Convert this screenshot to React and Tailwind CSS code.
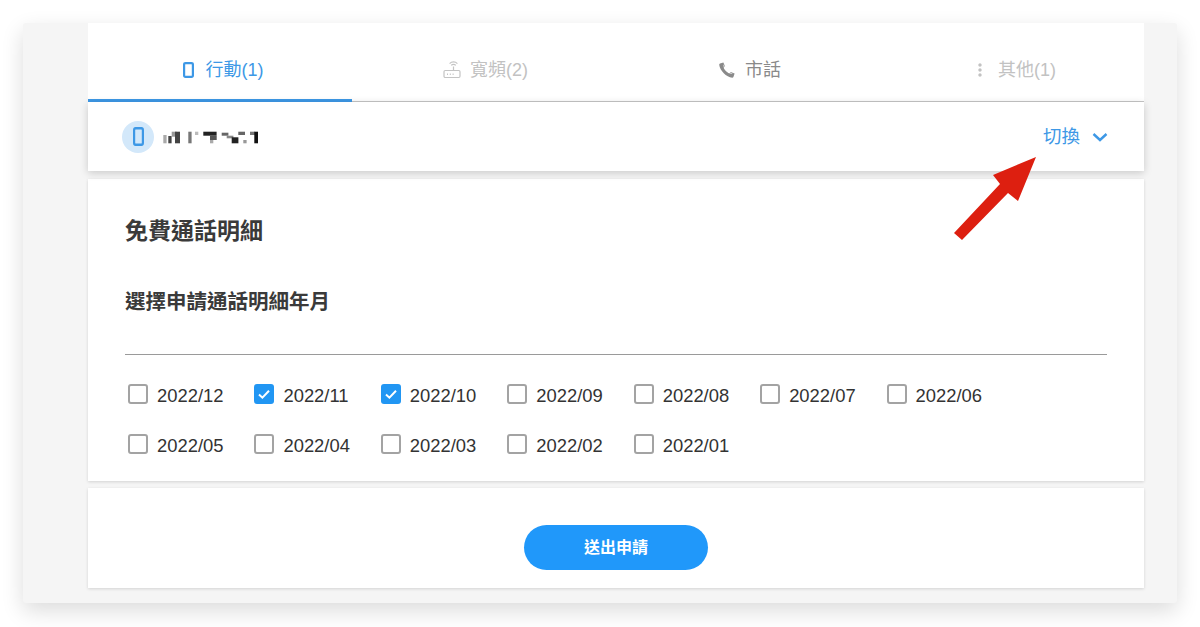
import React from 'react';
import { MdMoreVert } from 'react-icons/md';

const FONT = 'font-["Liberation_Sans","Noto_Sans_CJK_TC",sans-serif]';

const months = [
  ['2022/12', false],
  ['2022/11', true],
  ['2022/10', true],
  ['2022/09', false],
  ['2022/08', false],
  ['2022/07', false],
  ['2022/06', false],
  ['2022/05', false],
  ['2022/04', false],
  ['2022/03', false],
  ['2022/02', false],
  ['2022/01', false],
];

// pixelated number, blurred out in the reference: x, y, w, h, fill
const mosaic = [
  [1.3, 6, 3.3, 8.3, '#aaa'],
  [6.3, 7, 3.3, 7.3, '#444'],
  [9.7, 2.7, 5, 5, '#999'],
  [13, 2.7, 5, 11.6, '#444'],
  [26.3, 2.7, 3.3, 11.6, '#777'],
  [33, 2.7, 3.3, 3.3, '#bbb'],
  [41.3, 2.7, 13.3, 4, '#222'],
  [48, 6.7, 6.7, 4.3, '#555'],
  [48, 11, 3.3, 3.3, '#aaa'],
  [59.7, 3.7, 6.7, 3, '#666'],
  [64.7, 6.7, 6.7, 2.6, '#888'],
  [69.7, 8.3, 6.7, 6, '#222'],
  [76.3, 2.7, 6.7, 3.3, '#666'],
  [81.3, 11, 3.3, 3.3, '#999'],
  [88, 2.7, 5, 3.3, '#777'],
  [92.3, 2.7, 4, 11.6, '#111'],
];

const PhoneIcon = ({ className, fill }) => (
  <svg viewBox="0 0 12 18" preserveAspectRatio="none" className={className}>
    <rect x="1.2" y="1.2" width="9.6" height="15.6" rx="1.6" fill={fill} stroke="#3d98e6" strokeWidth="2.4" />
  </svg>
);

const RouterIcon = () => (
  <svg viewBox="0 0 18 18" className="w-[18px] h-[18px]" fill="none" stroke="#c4c4c4" strokeWidth="1.2">
    <rect x="1" y="9.5" width="16" height="7" rx="1.2" />
    <path d="M10.5 9.5V5.5" />
    <path d="M8.2 4.4a3.2 3.2 0 0 1 4.6 0" />
    <path d="M6.6 2.6a5.4 5.4 0 0 1 7.8 0" />
    <path d="M4 13.2h1M6.8 13.2h1M9.6 13.2h1" strokeWidth="1.4" />
  </svg>
);

const CallIcon = () => (
  <svg viewBox="0 0 18 18" className="w-[18px] h-[18px]" fill="#8a8a8a">
    <path d="M2 2.6 5.4 1.4 7 5.4 5.6 6.8C6.8 9.4 8.7 11.2 11.2 12.4L12.6 11 16.6 12.6 15.4 16C15.2 16.6 14.8 16.8 14.2 16.8 8.4 16.2 1.9 9.8 1.2 3.8 1.2 3.2 1.5 2.8 2 2.6Z" />
    <path d="M5.5 3.2C5 7.8 10 13.2 14.8 12.6 10.6 11.4 6.8 7.6 5.5 3.2Z" fill="#fff" />
  </svg>
);

const Tab = ({ icon, label, color, active, spacing }) => (
  <div className={`relative h-full pt-4 flex items-center justify-center text-[18px] ${spacing} ${color}`}>
    {icon}
    <span>{label}</span>
    {active && <div className="absolute left-0 right-0 bottom-[-1px] h-[3px] bg-[#3d98e6]" />}
  </div>
);

const Month = ({ label, checked }) => (
  <label className="flex items-center gap-[9px] h-[22px]">
    {checked ? (
      <span className="w-5 h-5 rounded-[3px] bg-[#2196f3] flex items-center justify-center">
        <svg viewBox="0 0 20 20" className="w-5 h-5" fill="none" stroke="#fff" strokeWidth="2">
          <path d="M5 10.5l3.4 3.2L15 6.8" />
        </svg>
      </span>
    ) : (
      <span className="w-5 h-5 rounded-[3px] border-2 border-[#a3a3a3] bg-white" />
    )}
    <span className="text-[18.4px] text-[#333] mt-[3px]">{label}</span>
  </label>
);

export default function App() {
  return (
    <div className={`relative w-[1200px] h-[627px] bg-white overflow-hidden pt-[23px] px-[23px] ${FONT}`}>
      <div className="h-[580px] rounded-[3px] bg-[#f5f5f5] pl-[65px] pr-[33px] shadow-[0_8px_22px_rgba(0,0,0,0.14)]">
        {/* Tabs */}
        <div className="h-[79px] bg-white grid grid-cols-4 border-b border-[#c6c6c6]">
          <Tab active label="行動(1)" color="text-[#3d98e6]" spacing="pl-[6px] gap-[12px]" icon={<PhoneIcon className="w-[11px] h-[16px]" fill="#fff" />} />
          <Tab label="寬頻(2)" color="text-[#c2c2c2]" spacing="pl-[3px] gap-[9px]" icon={<RouterIcon />} />
          <Tab label="市話" color="text-[#8a8a8a]" spacing="pl-[3px] gap-[9px]" icon={<CallIcon />} />
          <Tab label="其他(1)" color="text-[#c2c2c2]" spacing="pl-[2px] gap-[8px]" icon={<MdMoreVert size={20} className="text-[#c2c2c2]" />} />
        </div>

        {/* Account row */}
        <div className="h-[69px] bg-white flex items-center justify-between pl-[34px] pr-[36px] shadow-[0_2px_8px_rgba(0,0,0,0.18)] relative">
          <div className="flex items-center">
            <div className="w-8 h-8 rounded-full bg-[#d3e8fa] flex items-center justify-center">
              <PhoneIcon className="w-[11px] h-[19px]" fill="#d3e8fa" />
            </div>
            <svg viewBox="0 0 96 16" className="w-[96px] h-4 ml-[8px] blur-[0.4px]">
              {mosaic.map(([x, y, w, h, fill]) => (
                <rect key={`${x}-${y}`} x={x} y={y} width={w} height={h} fill={fill} />
              ))}
            </svg>
          </div>
          <div className="flex items-center gap-[12px] text-[18.5px] text-[#3d98e6]">
            <span>切換</span>
            <svg viewBox="0 0 16 10" className="w-4 h-[10px]" fill="none" stroke="#3d98e6" strokeWidth="2.4">
              <path d="M1.5 2 8 8l6.5-6" />
            </svg>
          </div>
        </div>

        {/* Month picker */}
        <div className="mt-2 h-[302px] bg-white px-[37px] pt-[37px] shadow-[0_1px_3px_rgba(0,0,0,0.14)]">
          <h2 className="text-[23px] leading-[30px] font-bold text-[#3a3a3a]">免費通話明細</h2>
          <h3 className="mt-[42px] text-[20.5px] leading-[28px] font-bold text-[#3a3a3a]">選擇申請通話明細年月</h3>
          <div className="mt-[38px] h-px bg-[#9a9a9a]" />
          <div className="mt-[28px] ml-[3px] grid grid-cols-7 gap-y-[28px] w-[885px]">
            {months.map(([label, checked]) => (
              <Month key={label} label={label} checked={checked} />
            ))}
          </div>
        </div>

        {/* Submit */}
        <div className="mt-[7px] h-[100px] bg-white flex justify-center pt-[37px] shadow-[0_1px_3px_rgba(0,0,0,0.14)]">
          <button className="w-[184px] h-[45px] rounded-full bg-[#2098fa] text-white text-[16px] font-bold">送出申請</button>
        </div>
      </div>

      {/* Annotation arrow over the screenshot */}
      <svg viewBox="0 0 100 100" className="absolute left-[945px] top-[150px] w-[100px] h-[100px]">
        <polygon points="91,7 73,51 63,43 17,90 9,83 55,34 48,25" fill="#dd1f10" />
      </svg>
    </div>
  );
}
